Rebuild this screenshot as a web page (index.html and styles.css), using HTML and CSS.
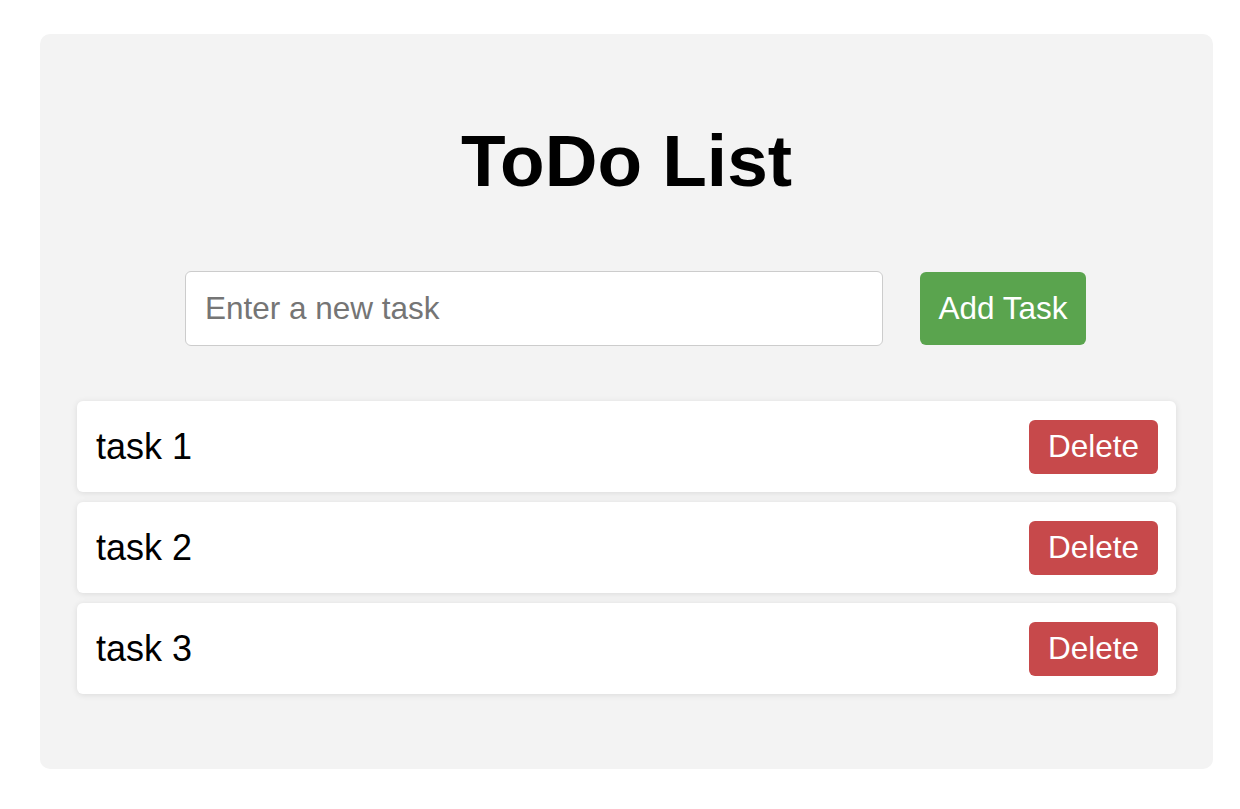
FILE: index.html
```html
<!DOCTYPE html>
<html lang="en">
<head>
<meta charset="utf-8">
<title>ToDo List</title>
<link rel="stylesheet" href="styles.css">
</head>
<body>
<div class="app">
  <h1 class="title">ToDo List</h1>
  <div class="add-row">
    <input class="task-input" type="text" placeholder="Enter a new task">
    <button class="add-btn" type="button">Add Task</button>
  </div>
  <ul class="task-list">
    <li class="task"><span class="task-text">task 1</span><button class="del-btn" type="button">Delete</button></li>
    <li class="task"><span class="task-text">task 2</span><button class="del-btn" type="button">Delete</button></li>
    <li class="task"><span class="task-text">task 3</span><button class="del-btn" type="button">Delete</button></li>
  </ul>
</div>
</body>
</html>
```
FILE: styles.css
```css
* { box-sizing: border-box; }
html, body { margin: 0; padding: 0; background: #fff; }
body {
  font-family: "Liberation Sans", Arial, sans-serif;
  padding-top: 34px;
  padding-left: 40px;
}
.app {
  width: 1173px;
  height: 735px;
  background: #f3f3f3;
  border-radius: 10px;
  padding: 85px 37px 0 37px;
}
.title {
  margin: 0;
  text-align: center;
  font-size: 73px;
  font-weight: bold;
  line-height: 83px;
  color: #000;
}
.add-row {
  display: flex;
  align-items: center;
  justify-content: center;
  gap: 37px;
  padding-left: 18px;
  margin-top: 69px;
}
.task-input {
  width: 698px;
  height: 75px;
  border: 1px solid #ccc;
  border-radius: 6px;
  padding: 0 19px;
  font-family: "Liberation Sans", Arial, sans-serif;
  font-size: 31.5px;
  background: #fff;
  outline: none;
}
.task-input::placeholder { color: #757575; }
.add-btn {
  width: 166px;
  height: 73px;
  border: none;
  border-radius: 6px;
  background: #5aa44e;
  color: #fff;
  font-family: "Liberation Sans", Arial, sans-serif;
  font-size: 31.5px;
  padding: 0;
}
.task-list {
  list-style: none;
  margin: 55px 0 0 0;
  padding: 0;
  display: flex;
  flex-direction: column;
  gap: 10px;
}
.task {
  display: flex;
  align-items: center;
  justify-content: space-between;
  height: 91px;
  background: #fff;
  border-radius: 6px;
  padding: 0 18px 0 19px;
  box-shadow: 0 1px 6px rgba(0, 0, 0, 0.1);
}
.task-text {
  font-size: 36px;
  color: #000;
}
.del-btn {
  width: 129px;
  height: 54px;
  border: none;
  border-radius: 6px;
  background: #c7494b;
  color: #fff;
  font-family: "Liberation Sans", Arial, sans-serif;
  font-size: 31.5px;
  padding: 0;
}
```
